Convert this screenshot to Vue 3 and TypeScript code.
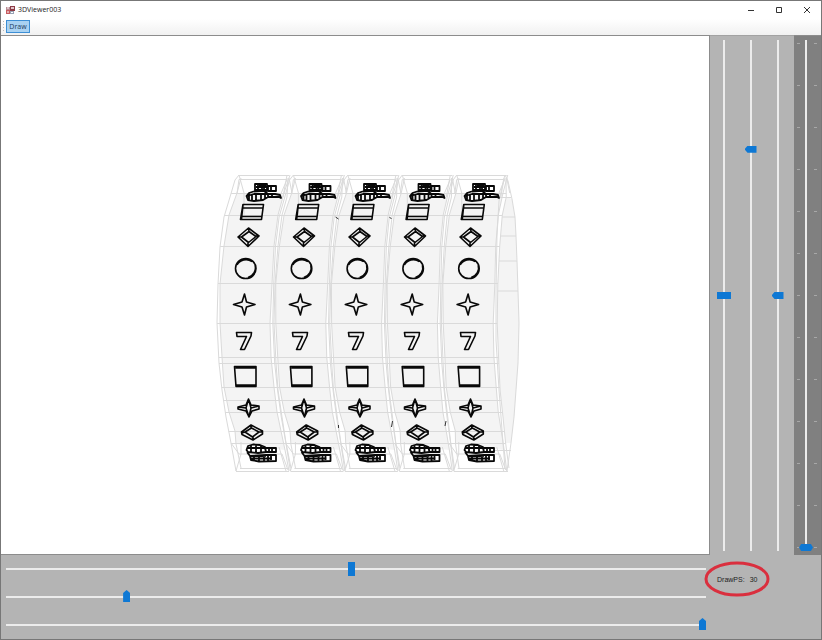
<script setup lang="ts">
import { ref, computed } from 'vue'

interface Slider { id: string; label: string; value: number; shape: string }

const horizontal = ref<Slider[]>([
  { id: 'pos-x', label: 'Position X', value: 493, shape: 'block' },
  { id: 'pos-y', label: 'Position Y', value: 169, shape: 'point' },
  { id: 'pos-z', label: 'Position Z', value: 1000, shape: 'point' },
])
const vertical = ref<Slider[]>([
  { id: 'rot-x', label: 'Rotation X', value: 500, shape: 'block' },
  { id: 'rot-y', label: 'Rotation Y', value: 790, shape: 'point' },
  { id: 'rot-z', label: 'Rotation Z', value: 500, shape: 'point' },
])
const speed = ref(0)
const rate = ref(30)

type Pt = [number, number]
const reels = [0, 1, 2, 3, 4]

// Edges of the first reel, top to bottom
const outerLeft: Pt[] = [[239, 175], [235, 180], [230, 197], [224, 217], [220, 247], [218, 284], [217, 323], [219, 363], [222, 390], [226, 417], [231, 443], [236, 471]]
const faceLeft: Pt[] = [[241, 178], [237, 193], [229, 215], [224, 246], [220, 284], [220, 323], [222, 357], [224, 387], [229, 412], [235, 431], [236, 444], [241, 468]]
const faceRight: Pt[] = [[290, 175], [284, 193], [278, 215], [274, 246], [272, 284], [270, 323], [271, 357], [274, 387], [277, 412], [281, 431], [285, 450], [289, 471]]
const rim: Pt[] = [[288, 178], [287, 197], [282, 215], [278, 246], [275, 284], [274, 323], [276, 363], [278, 390], [282, 417], [286, 443], [291, 468]]
const endRim: Pt[] = [[505, 175], [508, 181], [512, 199], [515, 217], [516, 236], [517, 261], [518, 291], [519, 323], [518, 363], [516, 390], [514, 417], [511, 443], [507, 471]]
const levels = [193, 215, 246, 283, 323, 357, 363, 387, 400, 412, 431, 443]

// The middle of the drum is nearer to the camera, so reels sit wider apart there
function step(y: number): number {
  return 55.8 - Math.pow(Math.abs(y - 323) / 150, 2) * 1.4
}
function shift(points: Pt[], i: number): Pt[] {
  return points.map(([x, y]): Pt => [x + step(y) * i, y])
}
function text(points: Pt[]): string {
  return points.map(p => p.join(',')).join(' ')
}
function xAt(points: Pt[], y: number): number {
  for (let k = 1; k < points.length; k++) {
    const [x0, y0] = points[k - 1]
    const [x1, y1] = points[k]
    if (y <= y1) return x0 + ((x1 - x0) * (y - y0)) / (y1 - y0)
  }
  return points[points.length - 1][0]
}

const mesh = computed(() => reels.map(i => {
  const left = shift(faceLeft, i)
  const right = shift(faceRight, i)
  const inner = (p: Pt) => p[1] >= 193 && p[1] <= 450
  return {
    fill: text([...left.filter(inner), ...right.filter(inner).reverse()]),
    edges: [text(shift(outerLeft, i)), text(left), text(right), text(shift(rim, i))],
    rows: levels.map(y => ({ y, x1: xAt(outerLeft, y) + step(y) * i, x2: xAt(rim, y) + step(y) * i })),
    top: 239 + step(175) * i,
    bottom: 236 + step(471) * i,
  }
}))
const endFill = text([...shift(rim, 4).filter(p => p[1] > 190 && p[1] < 450), ...endRim.filter(p => p[1] > 190 && p[1] < 450).reverse()])
const sideRows = [217, 236, 261, 291].map(y => ({ y, x1: xAt(rim, y) + step(y) * 4, x2: xAt(endRim, y) }))

const symbols = [
  { gap: 54.5, heavy: true, d: 'M255 184H267V190H255ZM258 184V190M262 184V190M256 187H268M259 185.500H266M264 185V191M268 186H276V191H268ZM271 187V191M246.500 196L249 193L255 191L264 191L268 194L268 197L263 200L254 201L248 200ZM247 196L254 194L268 194M249 193V200M252 195V201M256 195V201M261 194V200M265 194V199M254 191.500L268 190.500M268 194L275 194L280 195L281 198L279 197L275 197H268M272 194V197' },
  { gap: 55.2, heavy: false, d: 'M243 204.500H263.500L261.500 219.500H240.500ZM242 208H263M241 216.500H262M243 205L241.500 219' },
  { gap: 55.5, heavy: false, d: 'M238 237L248.500 228L259 236L248 246.500ZM241.500 237L249 231.500L256 236.500L248.500 242.500ZM248.500 228L249 231M238 237H242M259 236H256M248 246V243' },
  { gap: 55.8, heavy: false, d: 'M235.500 268.500A10.200 10 0 1 1 256 268.500A10.200 10 0 1 1 235.500 268.500ZM237 265A10 9 0 0 1 252 261.500M255 265A10 10 0 0 1 248 277.500' },
  { gap: 55.9, heavy: false, d: 'M244.500 294L246.500 302L255 304.500L246.500 307L244.500 315L242 307L233.500 304.500L242 302Z' },
  { gap: 56, heavy: false, d: 'M236.500 332.500H251.500L251 336L244.500 349.500H240.500L246.500 336.500H237Z' },
  { gap: 55.9, heavy: false, d: 'M234.500 366.500H256V386.500H236ZM235.500 368H256M236 385H256' },
  { gap: 55.5, heavy: false, d: 'M248.500 399L251 405L259 406V409L252 411L249 417L246 411L238 409V407L246 405ZM248.500 399L246 408L249 417L251 408ZM238 407L246 408M251 408L259 406' },
  { gap: 55.2, heavy: false, d: 'M241.500 432L251 425L262.500 431V434L253 440L242 434.500ZM245 432L251.500 428L259 432L252.500 437ZM251 425V428M242 433L245 432M262 432H259M253 440V437' },
  { gap: 54.5, heavy: true, d: 'M246.500 450L248 446L253 444.500L260 445L265 447L266 452L258 453L248 452ZM247 448H265M251 445V452M256 445V452M261 445V452M265 448H276V452H266ZM269 448V452M272 448V452M247 452L250 456H266M250 456L266 455H276V461L259 461.500L251 460ZM254 457V461M259 457V461M264 455V461M268 455V461M271 455V460M251 458.500H272' },
]
</script>

<template>
  <main class="window">
    <header class="titlebar">
      <svg class="app-icon" viewBox="0 0 9 9" aria-hidden="true">
        <rect x="0" y="1" width="4" height="3" fill="#b98a92" />
        <rect x="4" y="0" width="5" height="5" fill="#8d3a45" />
        <rect x="5" y="1" width="3" height="2" fill="#e3c4c8" />
        <rect x="0" y="4" width="4" height="4" fill="#c65a5e" />
        <rect x="4" y="5" width="4" height="3" fill="#98a2b4" />
        <path d="M1 2H3M1 6H3M5 6.500H7" stroke="#fff" stroke-width="1" />
      </svg>
      <h1>3DViewer003</h1>
      <div class="controls">
        <button type="button" aria-label="Minimize"><svg viewBox="0 0 8 8"><path d="M1 4.500H7" /></svg></button>
        <button type="button" aria-label="Maximize"><svg viewBox="0 0 8 8"><path d="M1.500 1.500H6.500V6.500H1.500Z" /></svg></button>
        <button type="button" aria-label="Close"><svg viewBox="0 0 8 8"><path d="M1 1L7 7M7 1L1 7" /></svg></button>
      </div>
    </header>
    <nav class="toolbar">
      <span class="grip"></span>
      <button type="button" class="draw">Draw</button>
    </nav>
    <div class="workspace">
      <section class="viewport">
        <svg viewBox="1 36 708 518" role="img" aria-label="Slot reels wireframe">
          <g class="mesh">
            <polygon class="face" :points="endFill" />
            <polygon v-for="(m, i) in mesh" :key="'f' + i" class="face" :points="m.fill" />
            <g v-for="(m, i) in mesh" :key="'m' + i">
              <polyline v-for="(e, k) in m.edges" :key="k" :points="e" />
              <line v-for="r in m.rows" :key="r.y" :x1="r.x1" :x2="r.x2" :y1="r.y + 0.5" :y2="r.y + 0.5" />
              <path :d="`M${m.top} 175.500h50M${m.top} 179.500h48l-6 14h-44zM${m.top} 175l5 18v22M${m.top + 48} 175l-4 22M${m.top + 50} 178l3 15`" />
              <path :d="`M${m.bottom} 471.500h53M${m.bottom + 4} 468.500h48M${m.bottom - 5} 443l8 11h43l6 16M${m.bottom} 471l5-17v-12M${m.bottom + 50} 471l-7-24`" />
            </g>
            <polyline :points="text(endRim)" />
            <polyline points="504,178 499,201 497,236 496,291 496,340 499,390 502,430 505,468" />
            <line v-for="r in sideRows" :key="'s' + r.y" :x1="r.x1" :x2="r.x2" :y1="r.y" :y2="r.y" />
            <path d="M457 175.500H505M454 471.500H508M490 450.500H511M492 197.500H511" />
          </g>
          <g v-for="(s, n) in symbols" :key="n" class="symbol" :class="{ heavy: s.heavy }">
            <path v-for="i in reels" :key="i" :d="s.d" :transform="`translate(${s.gap * i} 0)`" />
          </g>
          <path class="speck" d="M335.500 217L338.500 219M389.500 217L391.500 219M392.500 421L391.500 427M446 421L445 426M338.500 425V428" />
        </svg>
      </section>
      <aside class="rotation">
        <input v-for="s in vertical" :id="s.id" :key="s.id" v-model.number="s.value" type="range" min="0" max="1000" :aria-label="s.label" class="upright" :class="s.shape" />
      </aside>
      <aside class="speed">
        <input id="speed" v-model.number="speed" type="range" min="0" max="1000" aria-label="Speed" class="upright both" />
      </aside>
      <section class="position">
        <input v-for="s in horizontal" :id="s.id" :key="s.id" v-model.number="s.value" type="range" min="0" max="1000" :aria-label="s.label" class="level" :class="s.shape" />
      </section>
      <section class="status">
        <p><span>DrawPS:</span><output>{{ rate }}</output></p>
        <svg class="ring" viewBox="0 0 66 36" aria-hidden="true"><ellipse cx="33" cy="18" rx="31" ry="16" /></svg>
      </section>
    </div>
  </main>
</template>

<style>
body { margin: 0; }
</style>

<style scoped>
* { box-sizing: border-box; }
.window {
  display: flex;
  flex-direction: column;
  height: 100vh;
  border: 1px solid #777;
  background: #fff;
  color: #222;
  font-family: "Open Sans", "Noto Sans", sans-serif;
  font-size: 7px;
}
button { border: 0; padding: 0; background: none; font: inherit; color: inherit; }
.titlebar { flex: none; display: flex; align-items: center; height: 18px; padding: 0 0 0 5px; }
.app-icon { width: 9px; height: 9px; margin-right: 3px; }
h1 { margin: 0; font-size: 7px; font-weight: 400; line-height: 16px; }
.controls { display: flex; margin-left: auto; }
.controls button { display: flex; align-items: center; justify-content: center; width: 28px; height: 16px; }
.controls svg { width: 8px; height: 8px; fill: none; stroke: #333; }
.toolbar { flex: none; display: flex; align-items: center; gap: 2px; height: 16px; padding: 0 2px 2px; background: linear-gradient(#fff, #f1f1f1); }
.grip { width: 1px; height: 11px; background: repeating-linear-gradient(#bbb 0 1px, transparent 1px 3px); }
.draw { width: 24px; height: 13px; border: 1px solid #3d8fd5; background: #a9d2f2; line-height: 11px; color: #223c5c; }
.workspace { flex: 1; min-height: 0; display: grid; grid-template-columns: minmax(0, 1fr) 84px 27px; grid-template-rows: minmax(0, 1fr) 84px; background: #b4b4b4; }
.viewport { display: flex; min-height: 0; border: 1px solid #8c8c8c; border-left: 0; background: #fff; }
.viewport svg { width: 100%; height: 100%; min-width: 0; }
.mesh { fill: none; stroke: #dadada; stroke-width: 1; }
.face { fill: #f4f4f4; stroke: none; }
.symbol { fill: none; stroke: #080808; stroke-width: 1.6; stroke-linejoin: round; }
.heavy { stroke-width: 1.8; }
.speck { stroke: #333; fill: none; }
.rotation { display: flex; min-height: 0; padding: 4px 3px 4px 0; border-top: 1px solid #a2a2a2; }
.speed {
  display: flex;
  min-height: 0;
  padding: 4px 3px 4px 0;
  border-top: 1px solid #8c8c8c;
  background:
    linear-gradient(#a8a8a8 1px, transparent 1px) 3px 7px / 3px 42px repeat-y,
    linear-gradient(#a8a8a8 1px, transparent 1px) 20px 7px / 3px 42px repeat-y,
    #808080;
}
.position { display: flex; flex-direction: column; padding: 0 4px 0 5px; }
input { appearance: none; margin: 0; background: transparent; }
.level { display: block; width: 100%; height: 28px; }
.upright { writing-mode: vertical-lr; direction: rtl; flex: 1; min-width: 0; width: 28px; height: 100%; }
.level::-webkit-slider-runnable-track { height: 14px; background: linear-gradient(#ececec, #ececec) center / 100% 2px no-repeat; }
.upright::-webkit-slider-runnable-track { width: 14px; background: linear-gradient(#ececec, #ececec) center / 2px 100% no-repeat; }
input::-webkit-slider-thumb { appearance: none; border: 0; border-radius: 0; background: #0e78d4; }
.level::-webkit-slider-thumb { width: 7px; height: 14px; }
.upright::-webkit-slider-thumb { width: 14px; height: 7px; }
.level.point::-webkit-slider-thumb { height: 12px; clip-path: polygon(50% 0, 100% 25%, 100% 100%, 0 100%, 0 25%); }
.upright.point::-webkit-slider-thumb { width: 12px; margin-left: 1px; clip-path: polygon(0 50%, 25% 0, 100% 0, 100% 100%, 25% 100%); }
.upright.both::-webkit-slider-thumb { clip-path: polygon(0 50%, 15% 0, 85% 0, 100% 50%, 85% 100%, 15% 100%); }
.status { position: relative; grid-column: 2 / 4; padding: 20px 7px; font-family: "Liberation Sans", Arial, sans-serif; }
.status p { display: flex; gap: 5px; margin: 0; line-height: 10px; }
.ring { position: absolute; left: -6px; top: 6px; width: 66px; height: 36px; fill: none; stroke: #da2f3e; stroke-width: 3; }
</style>
